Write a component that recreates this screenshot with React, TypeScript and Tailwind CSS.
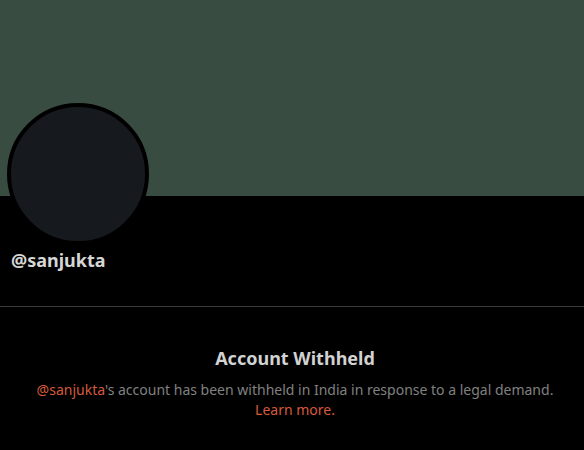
import React from 'react';

const App: React.FC = () => {
  return (
    <div className="h-[450px] w-[584px] overflow-hidden bg-black" style={{ fontFamily: '"Segoe UI", "Noto Sans", sans-serif' }}>
      <div className="h-[196px] w-full bg-[#394c41]" />
      <div className="px-[7px]">
        <div className="-mt-[93px] h-[142px] w-[142px] rounded-full border-4 border-black bg-[#16191e]" />
      </div>
      <div className="mt-[3px] px-[11px] text-[18px] font-bold leading-[24px] text-[#d6d6d6]">@sanjukta</div>
      <div className="mt-[34px] h-px w-full bg-[#3a3a3a]" />
      <div className="flex flex-col items-center pl-[6px] pt-[39px] text-center">
        <h1 className="text-[18px] font-bold leading-[24px] text-[#d2d2d2]">Account Withheld</h1>
        <p className="mt-[10px] text-[14px] leading-[20px] text-[#808080]">
          <span className="text-[#d65a3c]">@sanjukta</span>'s account has been withheld in India in response to a legal demand.
          <br />
          <a className="text-[#d65a3c]">Learn more.</a>
        </p>
      </div>
    </div>
  );
};

export default App;
